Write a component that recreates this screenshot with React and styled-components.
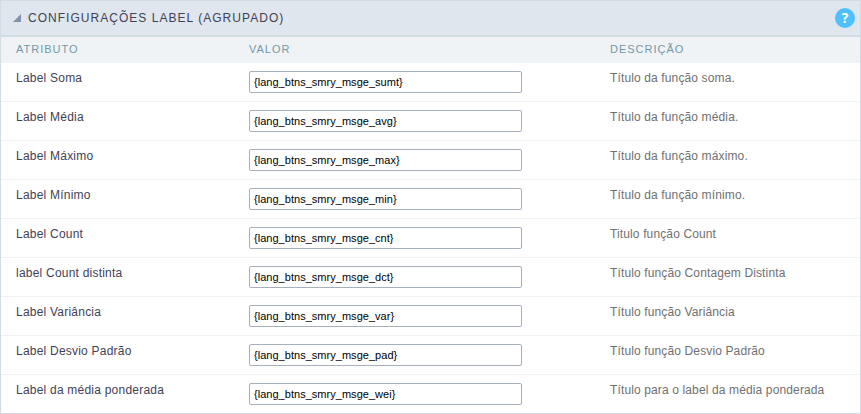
import React from "react";
import styled, { createGlobalStyle } from "styled-components";

const GlobalStyle = createGlobalStyle`
  *, *::before, *::after { box-sizing: border-box; }
  body {
    margin: 0;
    background: #fff;
    font-family: "Liberation Sans", Arial, sans-serif;
    font-size: 12px;
  }
`;

const Panel = styled.section`
  width: 861px;
  height: 414px;
  border: 1px solid #d1dce3;
  background: #fff;
  overflow: hidden;
`;

const PanelHeader = styled.header`
  display: flex;
  align-items: center;
  height: 36px;
  padding: 0 5px 0 12px;
  border-bottom: 2px solid #d1dce3;
  background: #dfe6ee;
`;

const Caret = styled.svg`
  display: block;
  width: 8px;
  height: 8px;
  margin-right: 7px;
`;

const Title = styled.h1`
  flex: 1;
  margin: 0;
  font-size: 12px;
  font-weight: 400;
  line-height: 16px;
  letter-spacing: 1.03px;
  text-transform: uppercase;
  color: #3f4254;
`;

const HelpButton = styled.button`
  width: 20px;
  height: 20px;
  padding: 0;
  border: 0;
  border-radius: 50%;
  background: #4fc0fc;
  color: #fff;
  font: 700 14px/20px "Open Sans", "Liberation Sans", sans-serif;
  text-align: center;
`;

const Columns = styled.div`
  display: grid;
  grid-template-columns: 233px 361px 1fr;
  padding-left: 15px;
`;

const ColumnHeader = styled(Columns)`
  height: 26px;
  background: #eff3f6;
  color: #7598a6;
  font-size: 11px;
  line-height: 25px;
  letter-spacing: 1px;
  text-transform: uppercase;
`;

const Row = styled(Columns)`
  height: 39px;
  padding-top: 8px;
  border-bottom: 1px solid #eef1f5;
  line-height: 14px;
`;

const Attribute = styled.label`
  color: #3f4254;
  letter-spacing: 0.22px;
`;

const Description = styled.span`
  color: #707070;
  letter-spacing: 0.13px;
`;

const ValueInput = styled.input`
  width: 273px;
  height: 22px;
  padding: 0 4px 1px;
  border: 1px solid #a6afbc;
  border-radius: 2px;
  background: #fff;
  color: #000;
  font: 11px "Liberation Sans", Arial, sans-serif;
  letter-spacing: 0.03px;
  outline: none;
`;

const rows = [
  ["sumt", "Label Soma", "Título da função soma."],
  ["avg", "Label Média", "Título da função média."],
  ["max", "Label Máximo", "Título da função máximo."],
  ["min", "Label Mínimo", "Título da função mínimo."],
  ["cnt", "Label Count", "Titulo função Count"],
  ["dct", "label Count distinta", "Título função Contagem Distinta"],
  ["var", "Label Variância", "Título função Variância"],
  ["pad", "Label Desvio Padrão", "Título função Desvio Padrão"],
  ["wei", "Label da média ponderada", "Título para o label da média ponderada"],
];

export default function App() {
  return (
    <>
      <GlobalStyle />
      <Panel>
        <PanelHeader>
          <Caret viewBox="0 0 8 8">
            <path d="M8 0V8H0Z" fill="#8292a8" />
          </Caret>
          <Title>Configurações Label (Agrupado)</Title>
          <HelpButton type="button">?</HelpButton>
        </PanelHeader>
        <ColumnHeader>
          <span>Atributo</span>
          <span>Valor</span>
          <span>Descrição</span>
        </ColumnHeader>
        {rows.map(([key, label, description]) => (
          <Row key={key}>
            <Attribute htmlFor={key}>{label}</Attribute>
            <ValueInput id={key} defaultValue={`{lang_btns_smry_msge_${key}}`} />
            <Description>{description}</Description>
          </Row>
        ))}
      </Panel>
    </>
  );
}
